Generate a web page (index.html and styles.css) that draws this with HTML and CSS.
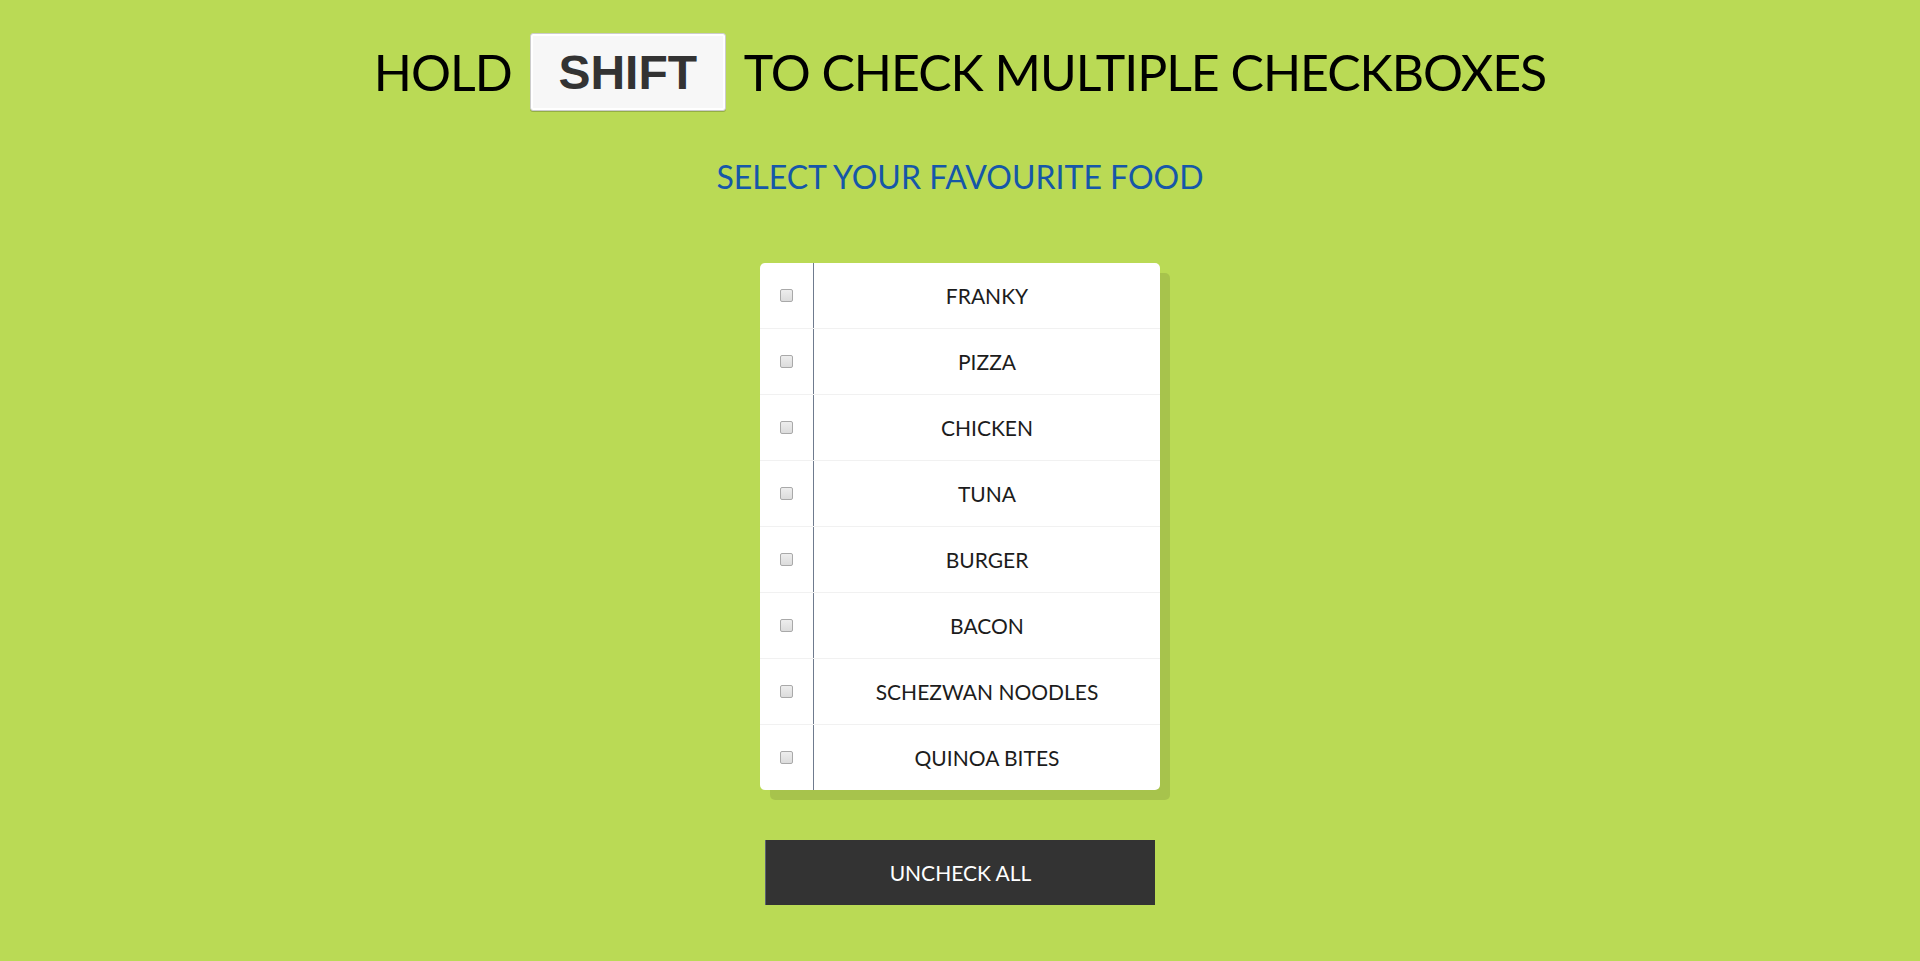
FILE: index.html
```html
<!doctype html>
<html lang="en">
<head>
    <meta charset="UTF-8">
    <title>Hold Shift to Check Multiple Checkboxes</title>
    <link rel="stylesheet" href="styles.css">
</head>
<body>
    <h1><span>HOLD</span><kbd>SHIFT</kbd><span>TO CHECK MULTIPLE CHECKBOXES</span></h1>
    <h2>SELECT YOUR FAVOURITE FOOD</h2>

    <div class="inbox">
        <div class="item"><input type="checkbox"><p>FRANKY</p></div>
        <div class="item"><input type="checkbox"><p>PIZZA</p></div>
        <div class="item"><input type="checkbox"><p>CHICKEN</p></div>
        <div class="item"><input type="checkbox"><p>TUNA</p></div>
        <div class="item"><input type="checkbox"><p>BURGER</p></div>
        <div class="item"><input type="checkbox"><p>BACON</p></div>
        <div class="item"><input type="checkbox"><p>SCHEZWAN NOODLES</p></div>
        <div class="item"><input type="checkbox"><p>QUINOA BITES</p></div>
    </div>

    <button class="uncheck" onclick="uncheckAll()">UNCHECK ALL</button>

    <script>
        const checkboxes = document.querySelectorAll('.inbox input[type="checkbox"]');
        let lastChecked;

        // shift-click checks everything between the two boxes
        function handleCheck(e) {
            let inBetween = false;
            if (e.shiftKey && this.checked && lastChecked) {
                checkboxes.forEach(box => {
                    if (box === this || box === lastChecked) {
                        inBetween = !inBetween;
                    }
                    if (inBetween) box.checked = true;
                });
            }
            lastChecked = this;
        }

        function uncheckAll() {
            checkboxes.forEach(box => box.checked = false);
            lastChecked = null;
        }

        checkboxes.forEach(box => box.addEventListener('click', handleCheck));
    </script>
</body>
</html>
```

FILE: styles.css
```css
html {
    background: #BADA55;
}
body {
    margin: 0;
    font-family: 'Lato', 'Open Sans', sans-serif;
    display: flex;
    flex-direction: column;
    align-items: center;
}
h1 {
    display: flex;
    align-items: center;
    justify-content: center;
    gap: 18px;
    margin: 33px 0 0;
    font-size: 50px;
    font-weight: 400;
    letter-spacing: -1px;
    color: #000;
}
kbd {
    display: inline-block;
    width: 196px;
    height: 78px;
    box-sizing: border-box;
    line-height: 78px;
    text-align: center;
    font-family: 'Liberation Sans', Arial, sans-serif;
    font-size: 48px;
    font-weight: 700;
    letter-spacing: 0;
    color: #333;
    background: #f7f7f7;
    border: 1px solid #ccc;
    border-radius: 3px;
    box-shadow: 0 1px 0 rgba(0,0,0,0.2), 0 0 0 2px #fff inset;
}
h2 {
    margin: 46px 0 0;
    font-size: 32px;
    font-weight: 400;
    line-height: 40px;
    color: #1657a8;
}
.inbox {
    margin-top: 66px;
    width: 400px;
    background: white;
    border-radius: 5px;
    box-shadow: 10px 10px 0 rgba(0,0,0,0.1);
}
.item {
    display: flex;
    align-items: center;
    border-bottom: 1px solid #f1f1f1;
}
.item:last-child {
    border-bottom: 0;
}
.item input {
    appearance: none;
    margin: 0 20px;
    width: 13px;
    height: 13px;
    border: 1px solid #a9a9a9;
    border-radius: 2px;
    background: linear-gradient(#ededed, #dcdcdc);
    cursor: pointer;
}
.item input:checked {
    background: #4a7fd0;
    border-color: #3a6cb8;
}
.item p {
    flex: 1;
    margin: 0;
    padding: 20px;
    line-height: 25px;
    font-size: 21px;
    color: #1c1c1c;
    text-align: center;
    border-left: 1px solid #6f7b8e;
}
.uncheck {
    margin-top: 50px;
    width: 390px;
    height: 65px;
    background: #333;
    color: white;
    border: none;
    border-left: 1px solid #5a6272;
    font-family: 'Lato', 'Open Sans', sans-serif;
    font-size: 21px;
    cursor: pointer;
}
```
